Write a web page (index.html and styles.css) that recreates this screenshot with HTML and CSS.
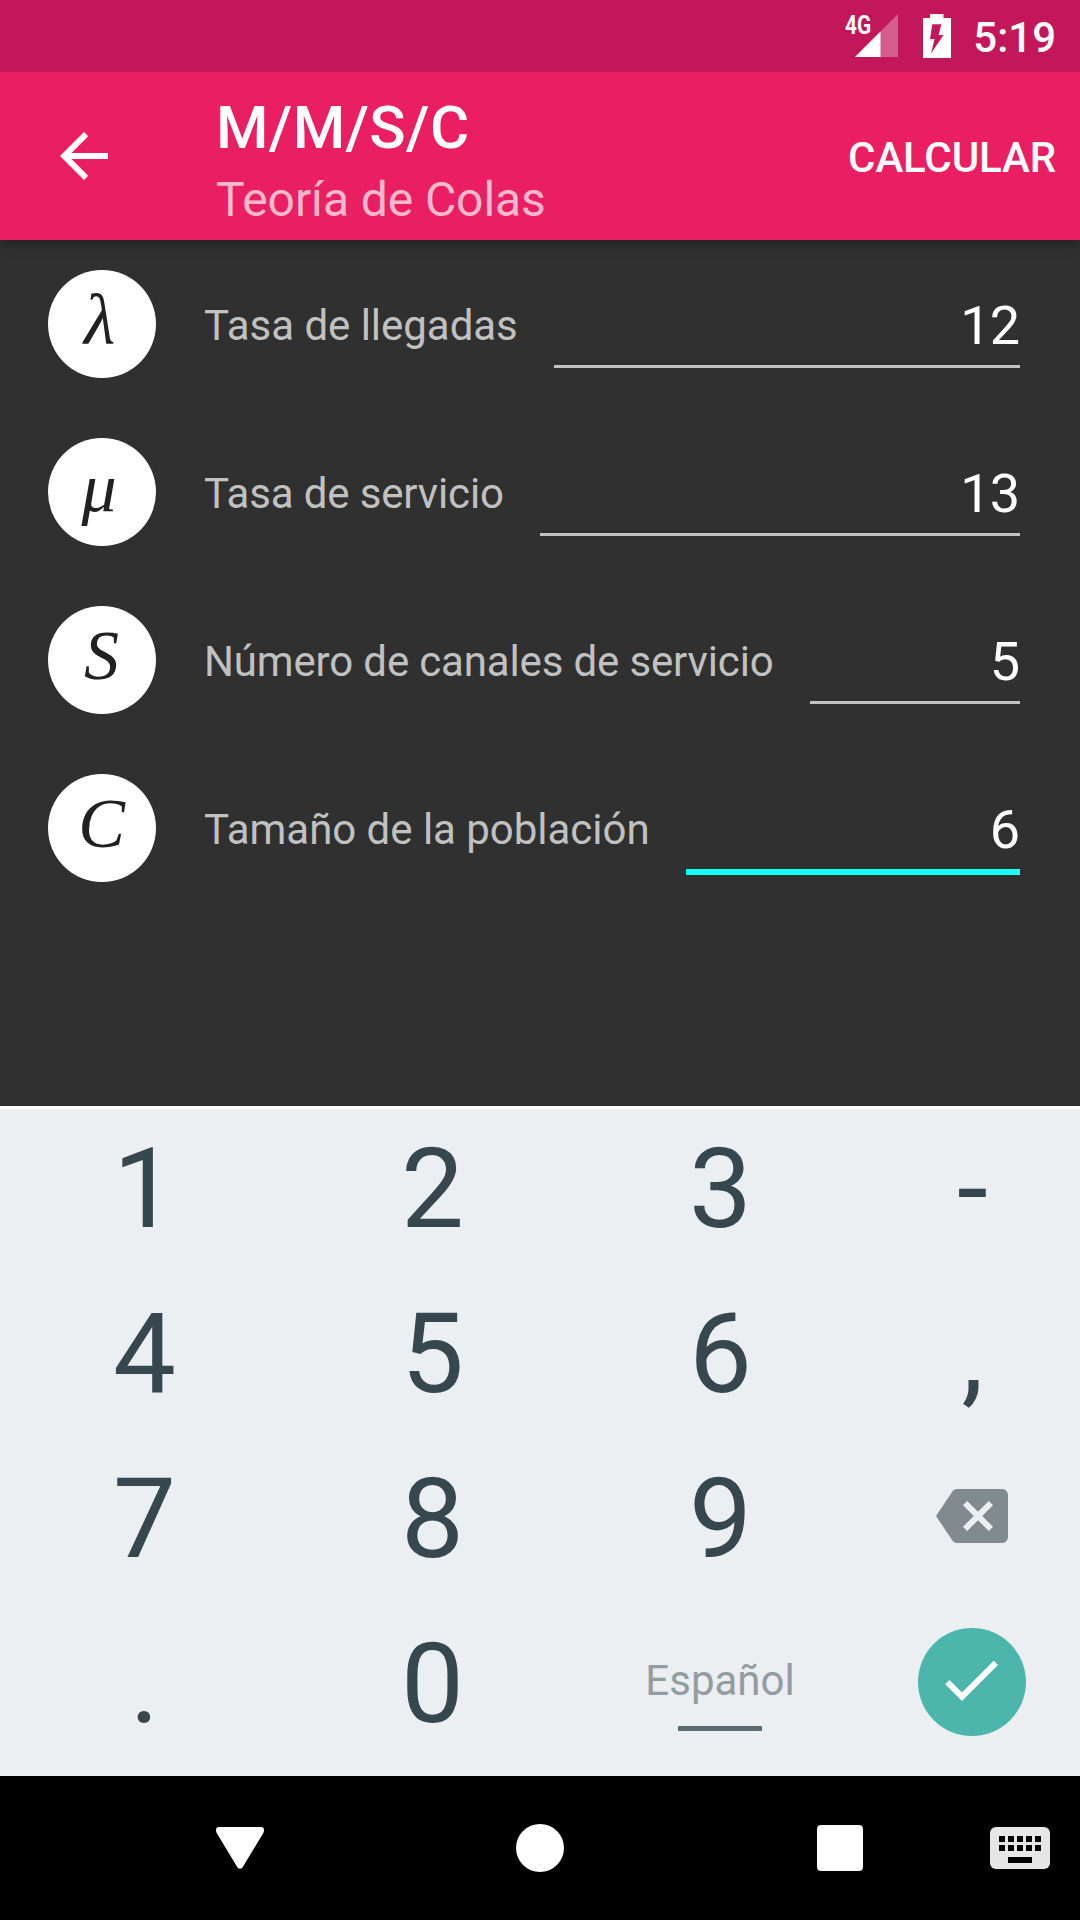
FILE: index.html
```html
<!DOCTYPE html>
<html lang="es">
<head>
<meta charset="utf-8">
<title>M/M/S/C</title>
<link rel="stylesheet" href="styles.css">
</head>
<body>
<div class="screen">
  <header class="status">
    <div class="network">
      <svg class="signal" width="43" height="43" viewBox="0 0 43 43"><path d="M43 0V43H0Z" fill="#fff" fill-opacity=".3"/><path d="M25.5 17.5V43H0Z" fill="#fff"/></svg>
      <span class="network-type">4G</span>
    </div>
    <svg class="battery" width="28" height="44" viewBox="0 0 28 44"><path fill="#fff" fill-rule="evenodd" d="M7 0H20.500V4H28V44H0V4H7ZM9.300 10.300L7 25H11.500L8 39.500L20.500 21H15.700L18.300 10.300Z"/></svg>
    <span class="clock">5:19</span>
  </header>

  <nav class="appbar">
    <svg class="back" width="72" height="72" viewBox="0 0 24 24"><path fill="#fff" d="M20 11H7.830l5.590-5.590L12 4l-8 8 8 8 1.410-1.410L7.830 13H20z"/></svg>
    <div class="titles">
      <h1 class="title">M/M/S/C</h1>
      <p class="subtitle">Teoría de Colas</p>
    </div>
    <span class="action">CALCULAR</span>
  </nav>

  <main class="form">
    <div class="row"><div class="symbol symbol-lambda">λ</div><span class="label">Tasa de llegadas</span><div class="field">12</div></div>
    <div class="row"><div class="symbol symbol-mu">μ</div><span class="label label-tight">Tasa de servicio</span><div class="field">13</div></div>
    <div class="row"><div class="symbol symbol-s">S</div><span class="label label-tight">Número de canales de servicio</span><div class="field">5</div></div>
    <div class="row"><div class="symbol symbol-c">C</div><span class="label">Tamaño de la población</span><div class="field focused">6</div></div>
  </main>

  <section class="keypad">
    <div class="key">1</div><div class="key">2</div><div class="key">3</div><div class="key">-</div>
    <div class="key">4</div><div class="key">5</div><div class="key">6</div><div class="key">,</div>
    <div class="key">7</div><div class="key">8</div><div class="key">9</div>
    <div class="key key-delete">
      <svg width="72" height="72" viewBox="0 0 24 24"><path fill="#818b8f" d="M22 3H7c-.69 0-1.230.35-1.590.88L0 12l5.410 8.110c.36.53.9.89 1.590.89h15c1.100 0 2-.9 2-2V5c0-1.100-.9-2-2-2zm-3 12.590L17.590 17 14 13.410 10.410 17 9 15.590 12.590 12 9 8.410 10.410 7 14 10.590 17.590 7 19 8.410 15.410 12 19 15.590z"/></svg>
    </div>
    <div class="key">.</div><div class="key">0</div>
    <div class="key key-space"><span class="language">Español</span><span class="space-bar"></span></div>
    <div class="key key-enter">
      <div class="enter"><svg width="72" height="72" viewBox="0 0 24 24"><path fill="#fff" d="M9 16.170L4.830 12l-1.420 1.410L9 19 21 7l-1.410-1.410z"/></svg></div>
    </div>
  </section>

  <footer class="navbar">
    <svg width="48" height="42" viewBox="0 0 48 42"><path fill="#fff" d="M3 0H45Q48 0 48 3Q48 5 47 6.500L26.500 40.500Q24 43 21.500 40.500L1 6.500Q0 5 0 3Q0 0 3 0Z"/></svg>
    <svg width="48" height="48" viewBox="0 0 48 48"><circle cx="24" cy="24" r="24" fill="#fff"/></svg>
    <svg width="46" height="46" viewBox="0 0 46 46"><rect width="46" height="46" rx="4" fill="#fff"/></svg>
    <svg width="60" height="42" viewBox="0 0 60 42"><rect width="60" height="42" rx="6" fill="#e6e6e6"/><path d="M9 9h6v6H9zM18 9h6v6h-6zM27 9h6v6h-6zM36 9h6v6h-6zM45 9h6v6h-6zM9 18h6v6H9zM18 18h6v6h-6zM27 18h6v6h-6zM36 18h6v6h-6zM45 18h6v6h-6zM18 30h24v6H18z"/></svg>
  </footer>
</div>
</body>
</html>
```
FILE: styles.css
```css
* { box-sizing: border-box; }

body {
  margin: 0;
  font-family: Roboto, sans-serif;
  background: #303030;
}

svg { display: block; flex: none; }

.screen {
  width: 1080px;
  height: 1920px;
  display: flex;
  flex-direction: column;
  overflow: hidden;
}

/* Status bar */
.status {
  position: relative;
  z-index: 1;
  height: 72px;
  flex: none;
  display: flex;
  align-items: flex-start;
  justify-content: flex-end;
  padding: 14px 24px 0 0;
  background: #c2185b;
  color: #fff;
}

.network {
  position: relative;
  margin-right: 25px;
}

.network-type {
  position: absolute;
  left: -10px;
  top: -4px;
  font-size: 26px;
  line-height: 30px;
  font-weight: 700;
  transform: scaleX(.8);
  transform-origin: left;
}

.clock {
  margin-left: 22px;
  font-size: 42px;
  line-height: 48px;
  font-weight: 500;
}

/* App bar */
.appbar {
  position: relative;
  height: 168px;
  flex: none;
  display: flex;
  align-items: center;
  padding: 0 24px 0 48px;
  background: #e91e63;
  color: #fff;
  box-shadow: 0 3px 12px rgba(0, 0, 0, .35);
}

.titles {
  flex: 1;
  padding: 8px 0 0 96px;
}

.title {
  margin: 0;
  font-size: 60px;
  line-height: 70px;
  font-weight: 500;
  letter-spacing: .4px;
}

.subtitle {
  margin: 9px 0 0;
  font-size: 48px;
  line-height: 56px;
  letter-spacing: -.08px;
  color: rgba(255, 255, 255, .7);
}

.action {
  padding-top: 3px;
  font-size: 42px;
  font-weight: 500;
  letter-spacing: -.12px;
}

/* Input rows */
.form {
  height: 866px;
  flex: none;
}

.row {
  height: 168px;
  display: flex;
  align-items: flex-start;
  padding: 30px 60px 0 48px;
}

.symbol {
  width: 108px;
  height: 108px;
  flex: none;
  border-radius: 50%;
  background: #fff;
  color: #212121;
  font: italic 70px/100px "Liberation Serif", serif;
  text-align: center;
}

.symbol-lambda {
  padding-right: 5px;
  font-size: 72px;
}

.symbol-mu { padding-right: 6px; }

.symbol-s { padding-right: 1px; }

.symbol-c { padding-right: 1px; }

.label {
  margin: 0 36px 0 48px;
  font-size: 42px;
  line-height: 111px;
  letter-spacing: -.03px;
  color: #c1c1c1;
  white-space: nowrap;
}

.label-tight { letter-spacing: -.15px; }

.field {
  flex: 1;
  padding: 16px 1px 0 0;
  border-bottom: 3px solid #c1c1c1;
  font-size: 54px;
  line-height: 79px;
  letter-spacing: -1px;
  color: #fff;
  text-align: right;
}

.focused { border-bottom: 6px solid #18ffff; }

/* Numeric keyboard */
.keypad {
  height: 670px;
  flex: none;
  display: grid;
  grid-template-columns: 288px 288px 288px 216px;
  grid-template-rows: repeat(4, 165px);
  background: #eceff1;
  box-shadow: inset 0 3px #fff;
}

.key {
  display: flex;
  align-items: center;
  justify-content: center;
  padding-left: 1px;
  font-size: 112px;
  line-height: 165px;
  color: #37474f;
}

.key-delete { padding: 0 0 5px; }

.key-enter { padding: 0 0 3px; }

.enter {
  width: 108px;
  height: 108px;
  display: flex;
  justify-content: center;
  padding: 16px 2px 0 0;
  border-radius: 50%;
  background: #4db6ac;
}

.key-space {
  flex-direction: column;
  gap: 20px;
  padding: 19px 0 0;
}

.language {
  font-size: 42px;
  line-height: 50px;
  color: #939ca0;
}

.space-bar {
  width: 84px;
  height: 5px;
  background: #5d6b72;
}

/* System navigation */
.navbar {
  height: 144px;
  flex: none;
  display: grid;
  grid-template-columns: 300px 300px 300px 60px;
  align-items: center;
  justify-items: center;
  padding-left: 90px;
  background: #000;
}
```
